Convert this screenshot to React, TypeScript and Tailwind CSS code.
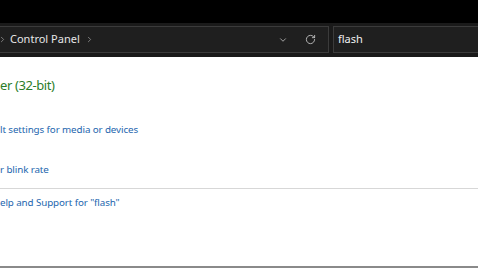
import { ChevronRight, ChevronDown, RotateCw } from "lucide-react";

export default function App() {
  return (
    <div className="h-[269px] w-[478px] overflow-hidden bg-white font-['Noto_Sans',sans-serif]">
      {/* Title area */}
      <div className="h-[23px] bg-black" />

      {/* Address row */}
      <div className="flex h-[34px] items-start bg-[#1a1a1a] pt-[3px]">
        <div className="flex h-[27px] w-[329px] items-center border-y border-r border-[#3b3b3b] bg-[#1f1f1f] text-[11px] text-[#e6e6e6]">
          <ChevronRight className="ml-[-2px] h-[9px] w-[9px] text-[#9a9a9a]" strokeWidth={2} />
          <span className="ml-[3px]">Control Panel</span>
          <ChevronRight className="ml-[5px] h-[9px] w-[9px] text-[#9a9a9a]" strokeWidth={2} />
          <div className="flex-1" />
          <ChevronDown className="h-[10px] w-[10px] text-[#bdbdbd]" strokeWidth={2} />
          <RotateCw className="ml-[17px] mr-[12px] h-[11px] w-[11px] text-[#bdbdbd]" strokeWidth={2} />
        </div>
        <div className="ml-[4px] flex h-[27px] flex-1 items-center border-y border-l border-[#3b3b3b] bg-[#1f1f1f] pl-[4px] text-[11px] text-[#f0f0f0]">
          flash
        </div>
      </div>

      {/* Results */}
      <div className="flex flex-col">
        <div className="mt-[19px] text-[13px] leading-[18px] tracking-[-0.4px] text-[#2a7d2a]">er (32-bit)</div>
        <div className="mt-[29px] text-[9.8px] leading-[14px] tracking-[-0.1px] text-[#2466ae]">lt settings for media or devices</div>
        <div className="mt-[26px] text-[9.8px] leading-[14px] tracking-[-0.1px] text-[#2466ae]">r blink rate</div>
        <div className="mt-[11px] h-px bg-[#d7d7d7]" />
        <div className="mt-[7px] text-[9.8px] leading-[14px] tracking-[-0.1px] text-[#2466ae]">elp and Support for "flash"</div>
        <div className="mt-[56px] h-[2px] bg-[#8a8a8a]" />
      </div>
    </div>
  );
}
